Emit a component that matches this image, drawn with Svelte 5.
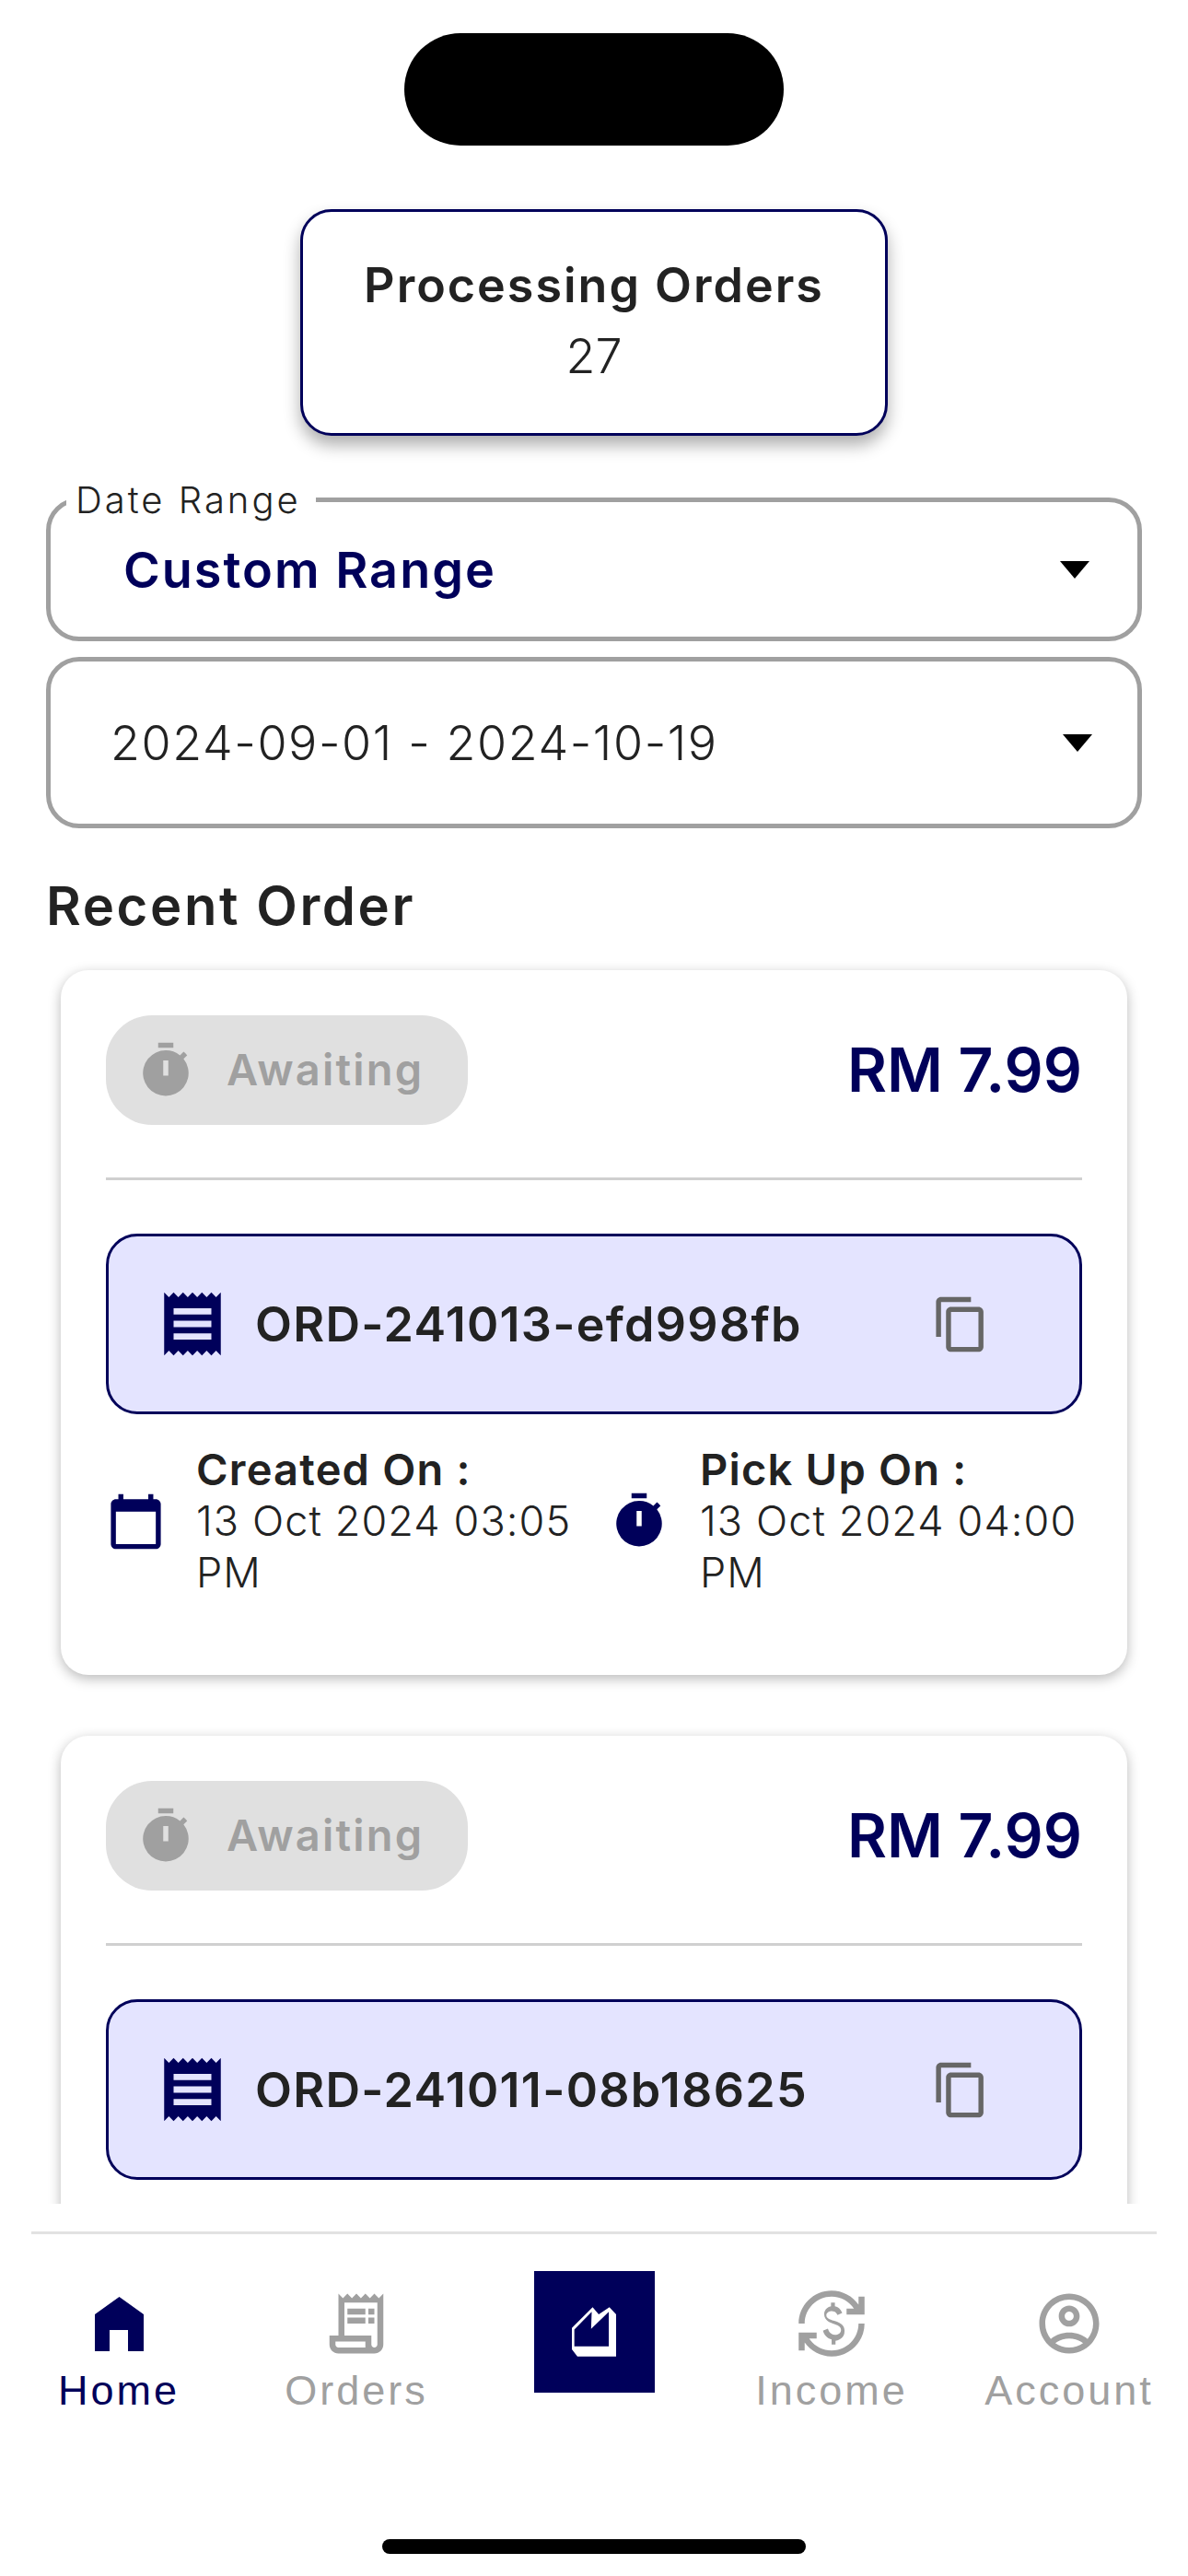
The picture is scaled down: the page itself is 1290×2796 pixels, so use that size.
<script>
  const orders = [
    { status: "Awaiting", total: "RM 7.99", id: "ORD-241013-efd998fb", created: "13 Oct 2024 03:05 PM", pickup: "13 Oct 2024 04:00 PM" },
    { status: "Awaiting", total: "RM 7.99", id: "ORD-241011-08b18625" }
  ]
</script>

{#snippet timer(cls)}
  <svg class={cls} viewBox="0 0 24 24" fill="currentColor" fill-rule="evenodd">
    <path d="M9 1h6v2H9z" />
    <path d="M19.03 7.39l1.42-1.42c-.43-.51-.9-.99-1.41-1.41l-1.42 1.42A8.96 8.96 0 0 0 12 4a9 9 0 1 0 7.03 3.39zM13 14h-2V8h2z" />
  </svg>
{/snippet}

{#snippet caret()}
  <svg class="caret" viewBox="0 0 32 19"><path d="M0 0h32L16 19z" /></svg>
{/snippet}

<div class="page">
  <div class="island"></div>

  <div class="summary">
    <div class="summary-title">Processing Orders</div>
    <div class="summary-count">27</div>
  </div>

  <div class="filters">
    <div class="select range">
      <span class="legend">Date Range</span>
      <span class="range-value">Custom Range</span>
      {@render caret()}
    </div>
    <div class="select dates">
      <span class="dates-value">2024-09-01 - 2024-10-19</span>
      {@render caret()}
    </div>
  </div>

  <h2>Recent Order</h2>

  <div class="list">
    {#each orders as order}
      <div class="card">
        <div class="card-head">
          <div class="pill">
            {@render timer("icon-timer")}
            <span>{order.status}</span>
          </div>
          <div class="total">{order.total}</div>
        </div>
        <div class="divider"></div>
        <div class="order-box">
          <svg class="icon-receipt" viewBox="0 0 24 24" fill="currentColor">
            <path d="M18 17H6v-2h12v2zm0-4H6v-2h12v2zm0-4H6V7h12v2zM3 22l1.5-1.5L6 22l1.5-1.5L9 22l1.5-1.5L12 22l1.5-1.5L15 22l1.5-1.5L18 22l1.5-1.5L21 22V2l-1.5 1.5L18 2l-1.5 1.5L15 2l-1.5 1.5L12 2l-1.5 1.5L9 2 7.5 3.5 6 2 4.5 3.5 3 2v20z" />
          </svg>
          <span class="order-id">{order.id}</span>
          <svg class="icon-copy" viewBox="0 0 24 24" fill="currentColor">
            <path d="M16 1H4c-1.1 0-2 .9-2 2v14h2V3h12V1zm3 4H8c-1.1 0-2 .9-2 2v14c0 1.1.9 2 2 2h11c1.1 0 2-.9 2-2V7c0-1.1-.9-2-2-2zm0 16H8V7h11v14z" />
          </svg>
        </div>
        {#if order.created}
          <div class="meta">
            <div class="meta-item">
              <svg class="icon-calendar" viewBox="0 0 24 24" fill="currentColor">
                <path d="M20 3h-1V1h-2v2H7V1H5v2H4c-1.1 0-2 .9-2 2v16c0 1.1.9 2 2 2h16c1.1 0 2-.9 2-2V5c0-1.1-.9-2-2-2zm0 18H4V8h16v13z" />
              </svg>
              <div class="meta-text">
                <strong>Created On :</strong>
                <span>{order.created}</span>
              </div>
            </div>
            <div class="meta-item">
              {@render timer("icon-timer")}
              <div class="meta-text">
                <strong>Pick Up On :</strong>
                <span>{order.pickup}</span>
              </div>
            </div>
          </div>
        {/if}
      </div>
    {/each}
  </div>

  <nav>
    <div class="tabs">
      <div class="tab active">
        <svg class="icon-home" viewBox="0 0 53 59" fill="currentColor">
          <path d="M0 19L26.5 0 53 19v40H36V36H16v23H0z" />
        </svg>
        <span>Home</span>
      </div>
      <div class="tab">
        <svg class="tab-icon" viewBox="0 0 24 24" fill="currentColor">
          <path d="M19.5 3.5L18 2l-1.5 1.5L15 2l-1.5 1.5L12 2l-1.5 1.5L9 2 7.5 3.5 6 2v14H3v3c0 1.66 1.34 3 3 3h12c1.66 0 3-1.34 3-3V2l-1.5 1.5zM15 20H6c-.55 0-1-.45-1-1v-1h10v2zm4-1c0 .55-.45 1-1 1s-1-.45-1-1v-3H8V5h11v14z" />
          <path d="M9 7h6v2H9zm7 0h2v2h-2zm-7 3h6v2H9zm7 0h2v2h-2z" />
        </svg>
        <span>Orders</span>
      </div>
      <div class="tab center">
        <div class="center-btn">
          <svg viewBox="0 0 145 161" fill="#fff" fill-rule="evenodd">
            <path d="M0 68L68 0l20 23L123 0l22 23v138H18L0 138zM8 73v55h113V15L63 71l2-56z" />
          </svg>
        </div>
      </div>
      <div class="tab">
        <svg class="tab-icon" viewBox="0 0 24 24" fill="currentColor">
          <path d="M12.89 11.1c-1.78-.59-2.64-.96-2.64-1.9 0-1.02 1.11-1.39 1.81-1.39 1.31 0 1.79.99 1.9 1.34l1.58-.67c-.15-.44-.82-1.91-2.44-2.23V5h-1.3v1.26c-2.26.48-2.28 2.48-2.28 2.58 0 2.27 2.25 2.91 3.35 3.31 1.58.56 2.28 1.07 2.28 2.03 0 1.13-1.05 1.61-1.98 1.61-1.82 0-2.34-1.87-2.4-2.09l-1.66.67c.63 2.19 2.28 2.78 2.9 2.96V19h1.3v-1.24c.52-.09 3.02-.59 3.02-3.22.01-1.39-.6-2.61-3.44-3.44z" />
          <path d="M3 21H1v-6h6v2H4.52c1.61 2.41 4.36 4 7.48 4 4.97 0 9-4.03 9-9h2c0 6.08-4.92 11-11 11-3.72 0-7.01-1.85-9-4.67V21zM1 12C1 5.92 5.92 1 12 1c3.72 0 7.01 1.85 9 4.67V3h2v6h-6V7h2.48C17.87 4.59 15.12 3 12 3c-4.97 0-9 4.03-9 9H1z" />
        </svg>
        <span>Income</span>
      </div>
      <div class="tab">
        <svg class="tab-icon" viewBox="0 0 24 24" fill="currentColor">
          <path d="M12 2C6.48 2 2 6.48 2 12s4.48 10 10 10 10-4.48 10-10S17.52 2 12 2zM7.35 18.5C8.66 17.56 10.26 17 12 17s3.34.56 4.65 1.5c-1.31.94-2.91 1.5-4.65 1.5s-3.34-.56-4.65-1.5zm10.79-1.38C16.45 15.8 14.32 15 12 15s-4.45.8-6.14 2.12C4.7 15.73 4 13.95 4 12c0-4.42 3.58-8 8-8s8 3.58 8 8c0 1.95-.7 3.73-1.86 5.12z" />
          <path d="M12 6c-1.93 0-3.5 1.57-3.5 3.5S10.07 13 12 13s3.5-1.57 3.5-3.5S13.93 6 12 6zm0 5c-.83 0-1.5-.67-1.5-1.5S11.17 8 12 8s1.5.67 1.5 1.5S12.83 11 12 11z" />
        </svg>
        <span>Account</span>
      </div>
    </div>
    <div class="home-bar"></div>
  </nav>
</div>

<style>
  :global(body) {
    margin: 0;
    background: #fff;
  }

  .page {
    width: 1290px;
    height: 2796px;
    display: flex;
    flex-direction: column;
    overflow: hidden;
    background: #fff;
    color: #222;
    font-family: Inter, "Liberation Sans", sans-serif;
  }

  .island {
    flex: none;
    width: 412px;
    height: 122px;
    margin: 36px auto 0;
    border-radius: 61px;
    background: #000;
  }

  .summary {
    flex: none;
    box-sizing: border-box;
    width: 638px;
    height: 246px;
    margin: 69px auto 0;
    padding-top: 49px;
    border: 3px solid #00005a;
    border-radius: 34px;
    background: #fff;
    box-shadow: 0 10px 18px rgba(0, 0, 0, 0.32);
    text-align: center;
  }
  .summary-title {
    font-size: 52px;
    font-weight: 600;
    line-height: 62px;
    letter-spacing: 2px;
  }
  .summary-count {
    margin-top: 15px;
    font-size: 52px;
    font-weight: 300;
    line-height: 62px;
  }

  .filters {
    flex: none;
    margin: 67px 50px 0 50px;
    display: flex;
    flex-direction: column;
    gap: 17px;
  }
  .select {
    position: relative;
    box-sizing: border-box;
    display: flex;
    align-items: center;
    justify-content: space-between;
    border: 5px solid #a0a0a0;
    border-radius: 36px;
  }
  .range {
    height: 156px;
    padding: 0 52px 0 79px;
  }
  .dates {
    height: 186px;
    padding: 0 49px 0 65px;
  }
  .legend {
    position: absolute;
    top: -27px;
    left: 17px;
    padding: 0 16px 0 10px;
    background: #fff;
    font-size: 40px;
    font-weight: 300;
    line-height: 50px;
    letter-spacing: 3px;
  }
  .range-value {
    color: #00005a;
    font-size: 54px;
    font-weight: 600;
    letter-spacing: 2px;
  }
  .dates-value {
    font-size: 52px;
    font-weight: 300;
    letter-spacing: 1.6px;
  }
  .caret {
    width: 32px;
    height: 19px;
    fill: #000;
  }

  h2 {
    flex: none;
    margin: 49px 0 0 50px;
    font-size: 58px;
    font-weight: 600;
    line-height: 70px;
    letter-spacing: 2.6px;
  }

  .list {
    flex: 1;
    min-height: 0;
    overflow: hidden;
    margin-bottom: 30px;
    padding: 35px 66px 0;
    display: flex;
    flex-direction: column;
    gap: 66px;
  }
  .card {
    flex: none;
    padding: 49px 49px 83px;
    border-radius: 30px;
    background: #fff;
    box-shadow: 0 4px 14px rgba(0, 0, 0, 0.28);
  }
  .card-head {
    display: flex;
    align-items: center;
    justify-content: space-between;
  }
  .pill {
    box-sizing: border-box;
    width: 393px;
    height: 119px;
    padding-left: 32px;
    display: flex;
    align-items: center;
    gap: 33px;
    border-radius: 50px;
    background: #e0e0e0;
    color: #a0a0a0;
    font-size: 47px;
    font-weight: 600;
    letter-spacing: 2.2px;
  }
  .pill span {
    margin-top: -2px;
  }
  .icon-timer {
    flex: none;
    width: 66px;
    height: 66px;
  }
  .total {
    color: #00005a;
    font-size: 66px;
    font-weight: 600;
    margin-top: -2px;
  }
  .divider {
    height: 3px;
    margin: 57px 0 58px;
    background: #d0d0d0;
  }

  .order-box {
    box-sizing: border-box;
    height: 196px;
    padding: 0 96px 0 50px;
    display: flex;
    align-items: center;
    border: 3px solid #00005a;
    border-radius: 34px;
    background: #e4e4ff;
  }
  .icon-receipt {
    flex: none;
    width: 82px;
    height: 82px;
    margin-right: 27px;
    color: #00005a;
  }
  .order-id {
    font-size: 52px;
    font-weight: 600;
    letter-spacing: 1.3px;
  }
  .icon-copy {
    flex: none;
    width: 65px;
    height: 65px;
    margin-left: auto;
    color: #666;
  }

  .meta {
    margin-top: 32px;
    display: grid;
    grid-template-columns: 546px 1fr;
  }
  .meta-item {
    display: flex;
    align-items: center;
    gap: 33px;
    color: #00005a;
  }
  .icon-calendar {
    flex: none;
    width: 65px;
    height: 65px;
  }
  .meta-text {
    color: #222;
    font-size: 45px;
    line-height: 56px;
    font-weight: 300;
    letter-spacing: 1.1px;
  }
  .meta-text strong {
    display: block;
    font-size: 47px;
    font-weight: 600;
    letter-spacing: 1.2px;
  }

  nav {
    flex: none;
    height: 374px;
    display: flex;
    flex-direction: column;
  }
  .tabs {
    position: relative;
    display: grid;
    grid-template-columns: repeat(5, 258px);
    padding-top: 61px;
  }
  .tabs::before {
    content: "";
    position: absolute;
    top: 0;
    left: 34px;
    right: 34px;
    height: 3px;
    background: #e2e2e2;
  }
  .tab {
    height: 137px;
    display: flex;
    flex-direction: column;
    align-items: center;
    color: #a0a0a0;
    font-family: "Liberation Sans", Arial, sans-serif;
    font-size: 45px;
    line-height: 50px;
    letter-spacing: 3px;
    white-space: nowrap;
  }
  .tab span {
    margin-top: auto;
  }
  .tab.active {
    color: #00005a;
  }
  .tab-icon {
    width: 78px;
    height: 78px;
  }
  .icon-home {
    width: 53px;
    height: 59px;
    margin-top: 10px;
  }
  .tab.center {
    margin-top: -18px;
  }
  .center-btn {
    width: 131px;
    height: 132px;
    display: flex;
    align-items: center;
    justify-content: center;
    background: #00005a;
  }
  .center-btn svg {
    width: 48px;
    height: 54px;
  }

  .home-bar {
    width: 460px;
    height: 16px;
    margin: auto auto 24px;
    border-radius: 8px;
    background: #000;
  }
</style>
